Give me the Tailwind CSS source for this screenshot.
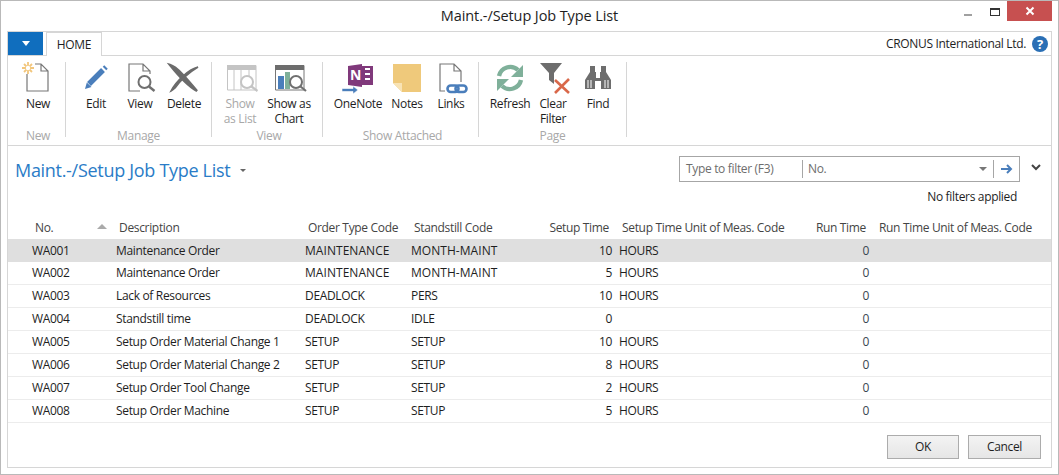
<!DOCTYPE html>
<html lang="en">
<head>
  <meta charset="UTF-8">
  <script src="https://cdn.jsdelivr.net/npm/@tailwindcss/browser@4"></script>
  <title>Maint.-/Setup Job Type List</title>
</head>
<body class="bg-white">
  <div class="w-[1059px] h-[475px] overflow-hidden flex flex-col border border-[#b9b9b9] bg-white font-['Open_Sans',sans-serif] text-[12px] tracking-[-0.33px] text-[#1e1e1e]">

    <!-- title bar -->
    <div class="h-[30px] shrink-0 flex items-start relative">
      <div class="flex-1 text-center text-[14.5px] leading-[30px] tracking-[-0.1px]">Maint.-/Setup Job Type List</div>
      <div class="absolute right-[6px] top-0 flex items-start">
        <div class="w-[8px] h-[2px] bg-[#a0a0a0] mt-[13px] mr-[18px]"></div>
        <div class="w-[10px] h-[8px] border border-[#333] border-t-2 mt-[7px] mr-[7px]"></div>
        <div class="w-[45px] h-[20px] bg-[#c75050] text-white flex items-center justify-center">
          <svg width="10" height="10" viewBox="0 0 10 10"><path d="M1.5 1.5l7 7M8.5 1.5l-7 7" stroke="#fff" stroke-width="2"/></svg>
        </div>
      </div>
    </div>

    <!-- inner frame -->
    <div class="mx-[6px] w-[1045px] h-[437px] shrink-0 flex flex-col border border-[#d6d6d6]">
      <!-- tabs -->
      <div class="h-[24px] shrink-0 flex items-end relative border-b border-[#d6d6d6]">
        <div class="w-[35px] h-[23px] bg-[#106ebe] flex items-center justify-center">
          <div class="w-0 h-0 border-x-[4px] border-x-transparent border-t-[5px] border-t-white"></div>
        </div>
        <div class="ml-[3px] w-[56px] h-[24px] -mb-px bg-white border border-b-0 border-[#d6d6d6] flex items-center justify-center z-10">HOME</div>
        <div class="ml-auto mr-[3px] flex items-center gap-[6px] self-center">
          <span>CRONUS International Ltd.</span>
          <span class="w-[16px] h-[16px] rounded-full bg-[#2a6fb5] text-white text-[13px] font-bold leading-[16px] text-center">?</span>
        </div>
      </div>

      <!-- ribbon -->
      <div class="h-[90px] shrink-0 flex border-b border-[#d6d6d6] text-center leading-[15px]">
        <div class="w-[58px] flex flex-col mt-[6px] mb-[8px] border-r border-[#d6d6d6] pl-[8px]">
          <div class="flex h-[66px] shrink-0">
            <div class="w-[44px] flex flex-col items-center">
              <svg class="w-8 h-8 overflow-visible" viewBox="0 0 32 32">
                <path d="M5 12V29H26V9L19 2H13M19 2V9H26" fill="#fff" stroke="#777" stroke-width="1.2"/>
                <path d="M6 0V12M0 6H12M2 2L10 10M10 2L2 10" stroke="#f2c67c" stroke-width="1.8"/>
                <circle cx="6" cy="6" r="2.2" fill="#fff"/>
              </svg>
              <span class="mt-[2px]">New</span>
            </div>
          </div>
          <div class="shrink-0 text-[#a8a8a8] pr-[5px]">New</div>
        </div>

        <div class="w-[146px] flex flex-col mt-[6px] mb-[8px] border-r border-[#d6d6d6] pl-[8px]">
          <div class="flex h-[66px] shrink-0">
            <div class="w-[44px] flex flex-col items-center">
              <svg class="w-8 h-8 overflow-visible" viewBox="0 0 32 32">
                <path d="M9 22L23 8" stroke="#4a7ebb" stroke-width="5.4"/>
                <path d="M24.5 6.5L26 5" stroke="#4a7ebb" stroke-width="5"/>
                <path d="M5 27L6.8 20.5L11.5 25Z" fill="#4a7ebb"/>
              </svg>
              <span class="mt-[2px]">Edit</span>
            </div>
            <div class="w-[44px] flex flex-col items-center">
              <svg class="w-8 h-8 overflow-visible" viewBox="0 0 32 32">
                <path d="M16 29H5V2H19L26 9V12M19 2V9H26" fill="none" stroke="#777" stroke-width="1.2"/>
                <circle cx="20.5" cy="20" r="6" fill="#fff" stroke="#707070" stroke-width="2"/>
                <path d="M25 24.5L30.5 29" stroke="#707070" stroke-width="2.4"/>
              </svg>
              <span class="mt-[2px]">View</span>
            </div>
            <div class="w-[44px] flex flex-col items-center">
              <svg class="w-8 h-8 overflow-visible" viewBox="0 0 32 32">
                <path d="M2 3C9 5 19 17 29 29C20 24 10 13 2 3Z" fill="#6b6b6b" stroke="#6b6b6b" stroke-width="2.4"/>
                <path d="M30 5C21 7 8 19 3 29C5 28 6 27 7 26C12 19 20 11 30 5Z" fill="#6b6b6b" stroke="#6b6b6b" stroke-width="1.6"/>
              </svg>
              <span class="mt-[2px]">Delete</span>
            </div>
          </div>
          <div class="shrink-0 text-[#a8a8a8] pr-[8px]">Manage</div>
        </div>

        <div class="w-[111px] flex flex-col mt-[6px] mb-[8px] border-r border-[#d6d6d6] pl-[6px]">
          <div class="flex h-[66px] shrink-0">
            <div class="w-[44px] flex flex-col items-center text-[#a8a8a8]">
              <svg class="w-8 h-8 overflow-visible" viewBox="0 0 32 32">
                <path d="M3.5 3.5H32V28H3.5Z" fill="#fff" stroke="#c4c4c4"/>
                <rect x="3" y="3" width="29" height="5" fill="#c4c4c4"/>
                <path d="M10 8V28M17 8V28M25 8V14" stroke="#c4c4c4"/>
                <circle cx="23" cy="20" r="6" fill="#fff" stroke="#c4c4c4" stroke-width="2"/>
                <path d="M27.5 24.5L33.5 29" stroke="#c4c4c4" stroke-width="2.2"/>
              </svg>
              <span class="mt-[2px]">Show<br>as List</span>
            </div>
            <div class="w-[50px] ml-[2px] flex flex-col items-center">
              <svg class="w-8 h-8 overflow-visible" viewBox="0 0 32 32">
                <path d="M2.5 3.5H31V28H2.5Z" fill="#fff" stroke="#777"/>
                <rect x="2" y="3" width="29" height="5" fill="#6d6d6d"/>
                <rect x="5" y="14" width="6" height="13" fill="#4a7ebb"/>
                <rect x="12" y="10" width="5" height="17" fill="#7fb09a"/>
                <circle cx="23" cy="20" r="6" fill="#fff" stroke="#707070" stroke-width="2"/>
                <path d="M27.5 24.5L33 29" stroke="#707070" stroke-width="2.2"/>
              </svg>
              <span class="mt-[2px]">Show as<br>Chart</span>
            </div>
          </div>
          <div class="shrink-0 text-[#a8a8a8] pl-[6px] pr-[8px]">View</div>
        </div>

        <div class="w-[156px] flex flex-col mt-[6px] mb-[8px] border-r border-[#d6d6d6] pl-[10px]">
          <div class="flex h-[66px] shrink-0">
            <div class="w-[50px] flex flex-col items-center">
              <svg class="w-8 h-8 overflow-visible" viewBox="0 0 32 32">
                <path d="M6 4L20 2V25L6 23Z" fill="#80397b"/>
                <path d="M20 4H31V23H20Z" fill="#80397b"/>
                <path d="M23 7H28M23 12H28M23 17H28" stroke="#fff" stroke-width="2"/>
                <text x="8" y="18" font-size="14" font-weight="700" fill="#fff" font-family="Open Sans">N</text>
                <path d="M0 26.5H11V24L16 28L11 32V29.5H0Z" fill="#4a7ebb" stroke="#fff" stroke-width="0.6"/>
              </svg>
              <span class="mt-[2px]">OneNote</span>
            </div>
            <div class="w-[48px] flex flex-col items-center">
              <svg class="w-8 h-8 overflow-visible" viewBox="0 0 32 32">
                <path d="M2 2H30V30H11L2 21Z" fill="#efc97b"/>
                <path d="M2 21H11V30Z" fill="#f8e3b5"/>
              </svg>
              <span class="mt-[2px]">Notes</span>
            </div>
            <div class="w-[40px] flex flex-col items-center">
              <svg class="w-8 h-8 overflow-visible" viewBox="0 0 32 32">
                <path d="M10 29H5V2H19L26 9V20M19 2V9H26" fill="none" stroke="#777" stroke-width="1.2"/>
                <rect x="12.5" y="23.5" width="11" height="6.5" rx="3.2" fill="none" stroke="#4a7ebb" stroke-width="2.6"/>
                <rect x="20.5" y="23.5" width="11" height="6.5" rx="3.2" fill="none" stroke="#4a7ebb" stroke-width="2.6"/>
              </svg>
              <span class="mt-[2px]">Links</span>
            </div>
          </div>
          <div class="shrink-0 text-[#a8a8a8] pr-[6px]">Show Attached</div>
        </div>

        <div class="w-[148px] flex flex-col mt-[6px] mb-[8px] border-r border-[#d6d6d6] pl-[6px]">
          <div class="flex h-[66px] shrink-0">
            <div class="w-[50px] flex flex-col items-center">
              <svg class="w-8 h-8 overflow-visible" viewBox="0 0 32 32">
                <path d="M5 14A11.5 11.5 0 0 1 24 8" fill="none" stroke="#7fb09a" stroke-width="4.4"/>
                <path d="M29 3V15H17Z" fill="#7fb09a"/>
                <path d="M27 18A11.5 11.5 0 0 1 8 24" fill="none" stroke="#7fb09a" stroke-width="4.4"/>
                <path d="M3 29V17H15Z" fill="#7fb09a"/>
              </svg>
              <span class="mt-[2px]">Refresh</span>
            </div>
            <div class="w-[36px] flex flex-col items-center">
              <svg class="w-8 h-8 overflow-visible" viewBox="0 0 32 32">
                <path d="M3 1H25L17 11V22L12 18V11Z" fill="#6d6d6d"/>
                <path d="M18 18L32 31M32 17L18 31" stroke="#d9684a" stroke-width="2.6"/>
              </svg>
              <span class="mt-[2px]">Clear<br>Filter</span>
            </div>
            <div class="w-[54px] flex flex-col items-center">
              <svg class="w-8 h-8 overflow-visible" viewBox="0 0 32 32">
                <path d="M8 4H13V10H14V16H18V10H19V4H24V10L29 18V27H19V19H13V27H3V18L8 10Z" fill="#6d6d6d"/>
                <path d="M6 18V26M9 18V26M23 18V26M26 18V26" stroke="#fff"/>
              </svg>
              <span class="mt-[2px]">Find</span>
            </div>
          </div>
          <div class="shrink-0 text-[#a8a8a8] pr-[6px]">Page</div>
        </div>
      </div>

      <!-- page heading and filter -->
      <div class="h-[72px] shrink-0 relative">
        <div class="flex items-center pl-[7px] pt-[11px] text-[18px] leading-[26px] tracking-[-0.3px] text-[#2a7cc7]">
          <span>Maint.-/Setup Job Type List</span>
          <span class="ml-[10px] w-0 h-0 border-x-[3px] border-x-transparent border-t-[3px] border-t-[#666]"></span>
        </div>
        <div class="absolute left-[671px] top-[10px] w-[341px] h-[26px] flex items-center border border-[#a6a6a6] text-[#6d6d6d]">
          <span class="w-[123px] pl-[6px] border-r border-[#a6a6a6] leading-[18px]">Type to filter (F3)</span>
          <span class="flex-1 pl-[5px]">No.</span>
          <span class="w-0 h-0 border-x-[4px] border-x-transparent border-t-[4px] border-t-[#777] mr-[6px]"></span>
          <span class="w-[26px] h-[18px] border-l border-[#a6a6a6] flex items-center justify-center">
            <svg width="12" height="10" viewBox="0 0 12 10"><path d="M0 5H9M6 1L10 5L6 9" fill="none" stroke="#4a7ebb" stroke-width="2"/></svg>
          </span>
        </div>
        <svg class="absolute left-[1023px] top-[18px]" width="10" height="7" viewBox="0 0 10 7"><path d="M1 1L5 5L9 1" fill="none" stroke="#444" stroke-width="2"/></svg>
        <div class="absolute right-[34px] top-[42px] leading-[18px]">No filters applied</div>
      </div>

      <!-- job type list -->
      <div class="flex-1 flex flex-col">
        <div id="list"></div>
        <div class="flex items-start justify-end gap-[9px] pr-[10px] pt-[12px]">
          <button class="w-[72px] h-[24px] border border-[#acacac] bg-gradient-to-b from-[#f3f3f3] to-[#e6e6e6]">OK</button>
          <button class="w-[73px] h-[24px] border border-[#acacac] bg-gradient-to-b from-[#f3f3f3] to-[#e6e6e6]">Cancel</button>
        </div>
      </div>
    </div>
  </div>

  <script>
    const rows = [
      ['WA001', 'Maintenance Order', 'MAINTENANCE', 'MONTH-MAINT', '10', 'HOURS'],
      ['WA002', 'Maintenance Order', 'MAINTENANCE', 'MONTH-MAINT', '5', 'HOURS'],
      ['WA003', 'Lack of Resources', 'DEADLOCK', 'PERS', '10', 'HOURS'],
      ['WA004', 'Standstill time', 'DEADLOCK', 'IDLE', '0', ''],
      ['WA005', 'Setup Order Material Change 1', 'SETUP', 'SETUP', '10', 'HOURS'],
      ['WA006', 'Setup Order Material Change 2', 'SETUP', 'SETUP', '8', 'HOURS'],
      ['WA007', 'Setup Order Tool Change', 'SETUP', 'SETUP', '2', 'HOURS'],
      ['WA008', 'Setup Order Machine', 'SETUP', 'SETUP', '5', 'HOURS']
    ];

    const cols = 'grid grid-cols-[104px_189px_106px_103px_105px_181px_76px_1fr] items-center';

    let html = `
      <div class="${cols} h-[22px] text-[#444] -mt-[1px] relative">
        <span class="pl-[27px]">No.</span>
        <span class="pl-[7px]">Description</span>
        <span class="pl-[7px]">Order Type Code</span>
        <span class="pl-[7px]">Standstill Code</span>
        <span class="text-right pr-[6px]">Setup Time</span>
        <span class="pl-[7px]">Setup Time Unit of Meas. Code</span>
        <span class="text-right pr-[6px]">Run Time</span>
        <span class="pl-[7px]">Run Time Unit of Meas. Code</span>
        <span class="absolute left-[89px] top-[7px] w-0 h-0 border-x-[5px] border-x-transparent border-b-[5px] border-b-[#aaa]"></span>
      </div>`;

    rows.forEach((r, i) => {
      const bg = i === 0 ? 'bg-[#dfdfdf]' : 'border-b border-[#ececec]';
      const code = i < 2 ? 'tracking-[0.05px]' : '';
      html += `
      <div class="${cols} h-[23px] ${bg}">
        <span class="pl-[24px]">${r[0]}</span>
        <span class="pl-[4px]">${r[1]}</span>
        <span class="pl-[4px] ${code}">${r[2]}</span>
        <span class="pl-[4px] ${code}">${r[3]}</span>
        <span class="text-right pr-[3px]">${r[4]}</span>
        <span class="pl-[4px]">${r[5]}</span>
        <span class="text-right pr-[3px] text-[#3a4650]">0</span>
        <span></span>
      </div>`;
    });

    document.getElementById('list').innerHTML = html;
  </script>
</body>
</html>
